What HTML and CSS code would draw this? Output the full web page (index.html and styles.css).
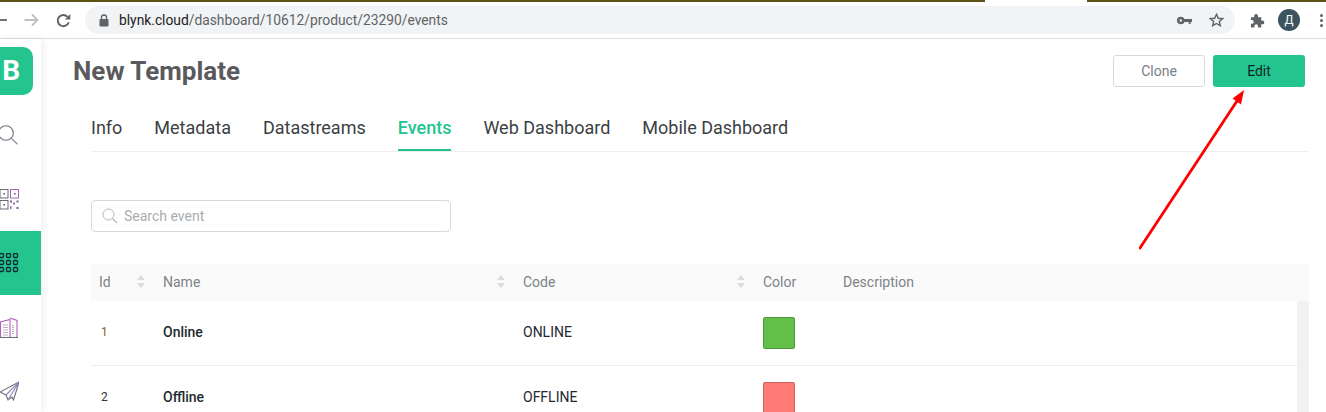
FILE: index.html
```html
<!DOCTYPE html>
<html lang="en">
<head>
  <meta charset="UTF-8" />
  <title>New Template - Events</title>
  <link rel="stylesheet" href="styles.css">
</head>
<body>
  <div class="topline">
    <div class="topline-gap"></div>
  </div>

  <div class="toolbar">
    <svg class="tb-back" width="8" height="14" viewBox="0 0 8 14"><path d="M0 7h7" stroke="#5f6368" stroke-width="1.8" fill="none"/></svg>
    <svg class="tb-forward" width="15" height="14" viewBox="0 0 15 14"><path d="M0.500 7h13M8 1.500L13.500 7L8 12.500" stroke="#bdc1c6" stroke-width="1.800" fill="none"/></svg>
    <svg class="tb-reload" width="15" height="15" viewBox="0 0 15 15"><path d="M12.700 9.200a5.600 5.600 0 1 1-1.200-5.400" stroke="#5f6368" stroke-width="1.900" fill="none"/><path d="M14.300 1v5.400H8.900z" fill="#5f6368"/></svg>
    <div class="omnibox">
      <svg class="lock" width="10" height="13" viewBox="0 0 10 13"><path d="M2.500 5V3.500a2.500 2.500 0 0 1 5 0V5" stroke="#5f6368" stroke-width="1.300" fill="none"/><rect x="0.500" y="5" width="9" height="7.500" rx="1" fill="#5f6368"/></svg>
      <span class="url"><span class="url-host">blynk.cloud</span>/dashboard/10612/product/23290/events</span>
      <svg class="omni-key" width="15" height="9" viewBox="0 0 16 9"><circle cx="4" cy="4.500" r="2.700" fill="none" stroke="#5f6368" stroke-width="2.800"/><path d="M7 3h9v3.200h-1.500v2h-2v-2H7z" fill="#5f6368"/></svg>
      <svg class="omni-star" width="15" height="14" viewBox="0 0 16 15"><path d="M8 1.400l1.900 4.300 4.600.4-3.500 3 1.100 4.500L8 11.200l-4.100 2.400L5 9.100l-3.500-3 4.600-.4z" fill="none" stroke="#5f6368" stroke-width="1.500"/></svg>
    </div>
    <svg class="tb-ext" width="15" height="15" viewBox="0 0 16 16"><path d="M1 4.500h3.500V3a2 2 0 0 1 4 0v1.500H12V8h1.300a2 2 0 0 1 0 4H12v3.500H8.500V14a1.900 1.900 0 0 0-3.800 0v1.500H1v-4h1a2 2 0 0 0 0-4H1z" fill="#5f6368"/></svg>
    <div class="avatar">Д</div>
    <div class="kebab"><i></i><i></i><i></i></div>
  </div>

  <div class="app">
    <nav class="sidebar">
      <div class="logo-row"><div class="logo">B</div></div>
      <div class="nav-item">
        <svg width="22" height="22" viewBox="0 0 22 22"><circle cx="9" cy="9" r="7.300" fill="none" stroke="#6f7278" stroke-width="1.100"/><path d="M14.300 14.300l6.200 5.900" stroke="#8b93a0" stroke-width="1.300"/></svg>
      </div>
      <div class="nav-item">
        <svg width="20" height="21" viewBox="0 0 20 21">
          <rect x="1" y="0.500" width="8" height="8.500" fill="none" stroke="#6f6a78"/><rect x="11.500" y="0.500" width="8" height="8.500" fill="none" stroke="#a565b5"/>
          <rect x="1" y="11.500" width="8" height="8.500" fill="none" stroke="#6f6a78"/>
          <rect x="4.500" y="4" width="1.500" height="1.500" fill="#555"/><rect x="15" y="4" width="1.500" height="1.500" fill="#555"/><rect x="4.500" y="15" width="1.500" height="1.500" fill="#555"/>
          <rect x="11" y="11.500" width="2" height="2" fill="#6f6a78"/><rect x="14" y="13.500" width="2" height="2" fill="#a565b5"/><rect x="17.500" y="11.500" width="2" height="2" fill="#6f6a78"/><rect x="11" y="17" width="1.500" height="3" fill="#a565b5"/><rect x="17.500" y="18" width="2" height="2" fill="#5566aa"/>
        </svg>
      </div>
      <div class="nav-item nav-active">
        <svg width="20" height="20" viewBox="0 0 20 20" fill="none" stroke="#102a36" stroke-width="1.300">
          <rect x="0.500" y="0.500" width="4" height="4" rx="1"/><rect x="7.500" y="0.500" width="4" height="4" rx="1"/><rect x="14.500" y="0.500" width="4" height="4" rx="1"/>
          <rect x="0.500" y="7.500" width="4" height="4" rx="1"/><rect x="7.500" y="7.500" width="4" height="4" rx="1"/><rect x="14.500" y="7.500" width="4" height="4" rx="1"/>
          <rect x="0.500" y="14.500" width="4" height="4" rx="1"/><rect x="7.500" y="14.500" width="4" height="4" rx="1"/><rect x="14.500" y="14.500" width="4" height="4" rx="1"/>
        </svg>
      </div>
      <div class="nav-item">
        <svg width="20" height="21" viewBox="0 0 20 21" fill="none" stroke="#b05fc0" stroke-width="1.100">
          <path d="M0 20.500h19" stroke="#6f6a78"/>
          <path d="M1.500 20V5l9.500-2.500V20"/><path d="M11 1l7 2.500V20"/>
          <path d="M4.500 8h4.500M4.500 10.500h4.500M4.500 13h4.500M4.500 15.500h4.500M4.500 18h4.500M14 8v10" stroke="#6f6a78" stroke-dasharray="1 1"/>
        </svg>
      </div>
      <div class="nav-item">
        <svg width="20" height="20" viewBox="0 0 20 20" fill="none" stroke="#6f6a78" stroke-width="1.100">
          <path d="M20 1L1 11l6 3 2 5 4-3 1.500 3z"/><path d="M20 1L7 14M20 1L9 19" stroke="#8a88b8"/>
        </svg>
      </div>
    </nav>

    <main class="content">
      <header class="page-head">
        <h1>New Template</h1>
        <div class="actions">
          <button class="btn btn-clone">Clone</button>
          <button class="btn btn-edit">Edit</button>
        </div>
      </header>

      <div class="tabs">
        <a class="tab">Info</a>
        <a class="tab">Metadata</a>
        <a class="tab">Datastreams</a>
        <a class="tab tab-active">Events</a>
        <a class="tab">Web Dashboard</a>
        <a class="tab">Mobile Dashboard</a>
      </div>

      <div class="search">
        <svg width="16" height="16" viewBox="0 0 16 16"><circle cx="6.500" cy="6.500" r="5.500" fill="none" stroke="#b4b4b4"/><path d="M10.500 10.500l4.500 4.500" stroke="#b4b4b4" stroke-width="1.100"/></svg>
        <span>Search event</span>
      </div>

      <div class="table">
        <div class="row row-head">
          <div class="cell c-id">Id<span class="sort"><i class="up"></i><i class="down"></i></span></div>
          <div class="cell c-name">Name<span class="sort"><i class="up"></i><i class="down"></i></span></div>
          <div class="cell c-code">Code<span class="sort"><i class="up"></i><i class="down"></i></span></div>
          <div class="cell c-color">Color</div>
          <div class="cell c-desc">Description</div>
        </div>
        <div class="table-body">
          <div class="row row-event">
            <div class="cell c-id">1</div>
            <div class="cell c-name">Online</div>
            <div class="cell c-code">ONLINE</div>
            <div class="cell c-color"><span class="swatch swatch-green"></span></div>
          </div>
          <div class="row row-event">
            <div class="cell c-id">2</div>
            <div class="cell c-name">Offline</div>
            <div class="cell c-code">OFFLINE</div>
            <div class="cell c-color"><span class="swatch swatch-red"></span></div>
          </div>
          <div class="scroll-track"></div>
        </div>
      </div>
    </main>
  </div>

  <svg class="arrow" width="110" height="165" viewBox="0 0 110 165">
    <path d="M1 161L98 14" stroke="#f00" stroke-width="2.800" stroke-linecap="round" fill="none"/>
    <path d="M105 3L102 17.500L93.500 11.500z" fill="#f00"/>
  </svg>
</body>
</html>
```

FILE: styles.css
```css
* {
  box-sizing: border-box;
}

html, body {
  height: 412px;
  overflow: hidden;
}

body {
  margin: 0;
  background: #fff;
  font-family: Roboto, sans-serif;
  color: #1e2a30;
}

/* browser chrome */
.topline {
  height: 2px;
  background: #5b5316;
  position: relative;
}

.topline-gap {
  position: absolute;
  left: 985px;
  top: 0;
  width: 102px;
  height: 2px;
  background: #fff;
}

.toolbar {
  height: 37px;
  border-bottom: 1px solid #dcdcdc;
  display: flex;
  align-items: center;
}

.tb-back {
  margin-right: 16px;
  flex: none;
}

.tb-forward {
  flex: none;
  margin-right: 17px;
}

.tb-reload {
  flex: none;
  margin-right: 14px;
}

.omnibox {
  width: 1150px;
  height: 28px;
  flex: none;
  background: #f1f3f4;
  border-radius: 14px;
  display: flex;
  align-items: center;
  padding-left: 14px;
}

.lock {
  flex: none;
  margin-right: 10px;
}

.url {
  font-size: 13.8px;
  color: #5f6368;
  flex: 1;
}

.url-host {
  color: #202124;
}

.omni-key {
  margin-right: 17px;
}

.omni-star {
  margin-right: 11px;
}

.tb-ext {
  flex: none;
  margin-left: 15px;
}

.avatar {
  flex: none;
  width: 22px;
  height: 22px;
  margin-left: 13px;
  border-radius: 50%;
  background: #3d5360;
  color: #fff;
  font-size: 12px;
  line-height: 22px;
  text-align: center;
}

.kebab {
  flex: none;
  margin-left: 20px;
  display: flex;
  flex-direction: column;
  gap: 2px;
}

.kebab i {
  width: 3px;
  height: 3px;
  border-radius: 50%;
  background: #5f6368;
}

/* app */
.app {
  display: flex;
  height: 373px;
}

.sidebar {
  width: 41px;
  flex: none;
  box-shadow: 3px 0 8px rgba(0,0,0,0.06);
  background: #fff;
}

.logo-row {
  height: 64px;
  padding-top: 8px;
}

.logo {
  width: 33px;
  height: 48px;
  background: #23c48e;
  border-radius: 0 10px 10px 0;
  color: #fff;
  font-size: 28px;
  font-weight: 700;
  line-height: 48px;
  text-align: right;
  padding-right: 13px;
}

.nav-item {
  height: 64px;
  display: flex;
  align-items: center;
  overflow: hidden;
  justify-content: flex-end;
  padding-right: 22px;
}

.nav-item svg {
  flex: none;
}

.nav-active {
  background: #23c48e;
}

.content {
  flex: 1;
  padding: 0 17px 0 32px;
  min-width: 0;
}

.page-head {
  display: flex;
  justify-content: space-between;
  height: 55px;
  padding-top: 16px;
}

h1 {
  margin: 0;
  font-size: 26px;
  font-weight: 700;
  color: #5a5a5e;
  line-height: 32px;
}

.actions {
  display: flex;
  gap: 8px;
  margin-right: 4px;
}

.btn {
  width: 92px;
  height: 32px;
  border-radius: 3px;
  font-family: Roboto, sans-serif;
  font-size: 14px;
  cursor: pointer;
}

.btn-clone {
  background: #fff;
  border: 1px solid #d9d9d9;
  color: #7c8185;
}

.btn-edit {
  background: #23c48e;
  border: none;
  color: #0f2428;
}

.tabs {
  margin-left: 18px;
  height: 58px;
  padding-top: 14px;
  border-bottom: 1px solid #eee;
  display: flex;
  gap: 32px;
}

.tab {
  height: 43px;
  font-size: 18px;
  line-height: 40px;
  color: #3a3f44;
}

.tab-active {
  color: #23c48e;
  font-weight: 500;
  border-bottom: 2px solid #23c48e;
}

.search {
  margin: 48px 0 0 18px;
  width: 360px;
  height: 32px;
  border: 1px solid #d9d9d9;
  border-radius: 4px;
  display: flex;
  align-items: center;
  gap: 6px;
  padding-left: 10px;
  font-size: 14px;
  color: #a9adb1;
}

.table {
  margin: 32px 0 0 18px;
}

.row {
  display: flex;
  align-items: center;
}

.row-head {
  height: 37px;
  padding-bottom: 2px;
  background: #fafafa;
  font-size: 14px;
  color: #7d8387;
}

.cell {
  padding-left: 8px;
  display: flex;
  align-items: center;
  justify-content: space-between;
}

.c-id { width: 64px; padding-right: 10px; }
.c-name { width: 360px; padding-right: 10px; }
.c-code { width: 240px; padding-right: 10px; }
.c-color { width: 80px; }
.c-desc { flex: 1; }

.sort {
  display: flex;
  flex-direction: column;
  gap: 3px;
}

.sort i {
  width: 0;
  height: 0;
  border-left: 4px solid transparent;
  border-right: 4px solid transparent;
}

.sort .up {
  border-bottom: 5px solid #dcdcdc;
}

.sort .down {
  border-top: 5px solid #dcdcdc;
}

.table-body {
  position: relative;
}

.row-event {
  height: 65px;
  border-bottom: 1px solid #eee;
  font-size: 14px;
  color: #1e2a30;
}

.row-event .c-id {
  padding-left: 10px;
  font-size: 12px;
  color: #8a5a2a;
}

.row-event + .row-event .c-id {
  color: #333;
}

.row-event .c-id,
.row-event .c-name,
.row-event .c-code {
  padding-bottom: 2px;
}

.row-event .c-name {
  font-weight: 500;
}

.swatch {
  width: 32px;
  height: 32px;
  border-radius: 2px;
  display: block;
}

.swatch-green {
  background: #64bf4a;
  border: 1px solid #4b9a38;
}

.swatch-red {
  background: #ff7b75;
  border: 1px solid #c85f5b;
}

.scroll-track {
  position: absolute;
  right: 0;
  top: 0;
  bottom: 0;
  width: 12px;
  background: #f1f1f1;
}

/* annotation over the screenshot */
.arrow {
  position: absolute;
  left: 1139px;
  top: 87px;
}
```
